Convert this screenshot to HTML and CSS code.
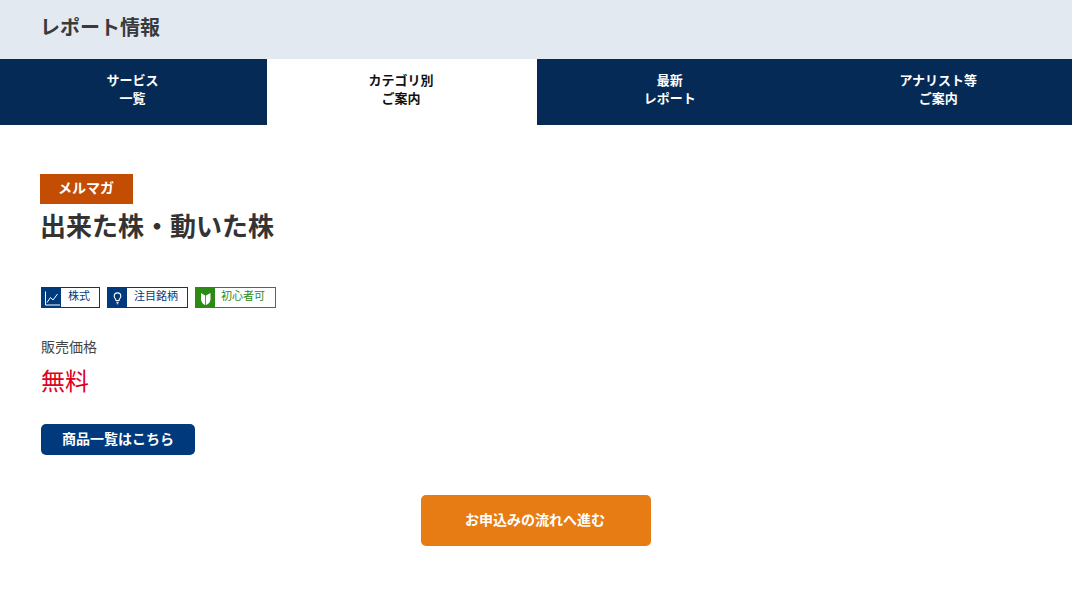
FILE: index.html
```html
<!DOCTYPE html>
<html lang="ja">
<head>
<meta charset="utf-8">
<title>レポート情報</title>
<link rel="stylesheet" href="styles.css">
</head>
<body>
<header class="page-head"><h1 class="page-title">レポート情報</h1></header>
<nav class="tabs">
  <a class="tab">サービス<br>一覧</a>
  <a class="tab tab-active">カテゴリ別<br>ご案内</a>
  <a class="tab">最新<br>レポート</a>
  <a class="tab tab-last">アナリスト等<br>ご案内</a>
</nav>
<main class="content">
  <div class="badge">メルマガ</div>
  <h2 class="report-title">出来た株・動いた株</h2>
  <ul class="tags">
    <li class="tag">
      <span class="tag-icon"><svg width="19" height="19" viewBox="0 0 19 19" fill="none" stroke="#fff" stroke-width="1"><path d="M3.500 3.500v13.500H18"/><path d="M5 14.500l3.500-5 2.500 2.500 4.500-6"/></svg></span>
      <span class="tag-label tag-label-stock">株式</span>
    </li>
    <li class="tag">
      <span class="tag-icon"><svg width="19" height="19" viewBox="0 0 19 19" fill="none" stroke="#fff" stroke-width="1.100"><path d="M8 12.500c0-1.800-1.800-2.200-1.800-4.300a3.300 3.300 0 0 1 6.600 0c0 2.100-1.800 2.500-1.800 4.300z"/><path d="M8.300 14.300h2.400M8.800 15.800h1.400"/></svg></span>
      <span class="tag-label tag-label-watch">注目銘柄</span>
    </li>
    <li class="tag tag-green">
      <span class="tag-icon"><svg width="19" height="19" viewBox="0 0 19 19"><path fill="#fff" d="M5 5l4.100 2.500V17C6.300 16 5 13.500 5 11z"/><path fill="#fff" d="M14.500 5l-4.600 2.500V17c3.300-1 4.600-3.500 4.600-6z"/></svg></span>
      <span class="tag-label tag-label-begin">初心者可</span>
    </li>
  </ul>
  <p class="price-label">販売価格</p>
  <p class="price">無料</p>
  <a class="list-button">商品一覧はこちら</a>
  <div class="apply-row"><a class="apply-button">お申込みの流れへ進む</a></div>
</main>
</body>
</html>
```

FILE: styles.css
```css
* { box-sizing: border-box; }
html, body { margin: 0; padding: 0; }
body {
  background: #fff;
  color: #333;
  font-family: "Noto Sans CJK JP", "Noto Sans", sans-serif;
  overflow: hidden;
}
.page-head {
  height: 59px;
  background: #e2e9f1;
  padding: 0 40px;
  display: flex;
  align-items: center;
}
.page-title { margin: 0 0 6px 0; font-size: 20px; line-height: 28px; font-weight: 700; color: #3a3a3a; }
.tabs {
  display: grid;
  grid-template-columns: 267px 270px 1fr 1fr;
  height: 66px;
  background: #052a56;
}
.tab {
  display: block;
  padding: 12px 2px 0 0;
  text-align: center;
  font-size: 13px;
  line-height: 18px;
  font-weight: 700;
  color: #fff;
}
.tab-active { background: #fff; color: #111; }
.tab-last { padding-right: 0; }
.content { padding: 49px 41px 0; }
.badge {
  width: 93px;
  height: 30px;
  margin-left: -1px;
  padding-right: 1px;
  background: #c44d04;
  color: #fff;
  font-size: 14px;
  font-weight: 700;
  line-height: 26px;
  text-align: center;
}
.report-title { margin: 2px 0 0 -1px; font-size: 26px; line-height: 38px; font-weight: 700; color: #333; }
.tags { list-style: none; margin: 43px 0 0; padding: 0; display: flex; gap: 7px; }
.tag {
  display: flex;
  height: 21px;
  border: 1px solid #003a7d;
  color: #003a7d;
  font-size: 11px;
  line-height: 15px;
}
.tag-icon { display: flex; align-items: center; justify-content: center; background: #003a7d; width: 19px; }
.tag-label { display: block; text-align: center; padding-right: 2px; }
.tag-label-stock { width: 38px; }
.tag-label-watch { width: 60px; }
.tag-label-begin { width: 60px; padding-right: 4px; }
.tag-green { border-color: #2b8a13; color: #2b8a13; }
.tag-green .tag-icon { background: #2b8a13; }
.price-label { margin: 28px 0 0; font-size: 14px; line-height: 20px; color: #444; }
.price { margin: 7px 0 0; font-size: 24px; line-height: 34px; color: #e00020; }
.list-button {
  display: block;
  width: 154px;
  height: 31px;
  margin-top: 27px;
  background: #003a7d;
  border-radius: 5px;
  color: #fff;
  font-size: 14px;
  font-weight: 700;
  line-height: 28px;
  text-align: center;
}
.apply-row { display: flex; justify-content: center; margin: 40px -41px 0; }
.apply-button {
  display: block;
  width: 230px;
  height: 51px;
  background: #e67c13;
  border-radius: 5px;
  color: #fff;
  font-size: 14px;
  font-weight: 700;
  line-height: 48px;
  padding-right: 2px;
  text-align: center;
}
```
